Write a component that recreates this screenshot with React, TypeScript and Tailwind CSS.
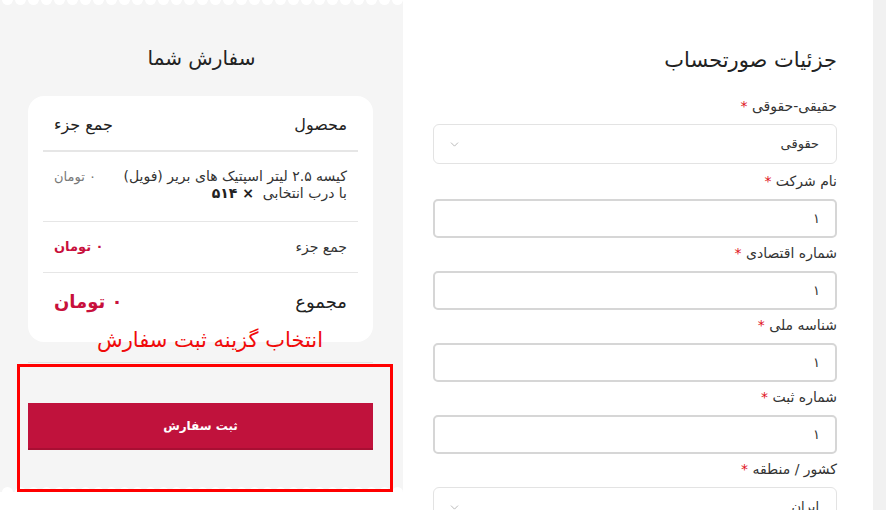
import React from 'react';
import { ChevronDown } from 'lucide-react';

const font = { fontFamily: '"DejaVu Sans", "Noto Sans", sans-serif' };

const Scallops: React.FC<{ bottom?: boolean }> = ({ bottom }) => (
  <div
    className={`absolute left-0 right-0 flex gap-[2px] overflow-hidden pointer-events-none ${
      bottom ? 'bottom-[-6px]' : 'top-[-6px]'
    }`}
  >
    {Array.from({ length: 34 }).map((_, i) => (
      <div key={i} className="w-[11px] h-[11px] rounded-full bg-white shrink-0" />
    ))}
  </div>
);

const Label: React.FC<{ text: string }> = ({ text }) => (
  <div className="pt-[5px] pb-[8px] h-[33px] text-[14px] leading-[20px] text-[#333]">
    {text} <span className="text-[#e01020]">*</span>
  </div>
);

const TextInput: React.FC<{ value: string }> = ({ value }) => (
  <div className="h-[39px] border-2 border-[#d6d6d6] rounded-[5px] flex items-center px-[15px] text-[13px] text-[#333]">
    {value}
  </div>
);

const SelectBox: React.FC<{ value: string }> = ({ value }) => (
  <div className="h-[40px] border border-[#e3e3e3] rounded-[6px] flex items-center justify-between pr-[17px] pl-[14px] text-[13px] text-[#333]">
    <span>{value}</span>
    <ChevronDown size={13} strokeWidth={1.5} className="text-[#aaa]" />
  </div>
);

const OrderSummary: React.FC = () => (
  <section className="relative w-[403px] h-[492px] bg-[#f5f5f5] shrink-0">
    <Scallops />
    <Scallops bottom />
    <h2 className="pt-[44px] text-center text-[20px] leading-[28px] text-[#222]">سفارش شما</h2>

    <div className="mr-[30px] ml-[28px] mt-[24px] h-[246px] bg-white rounded-[16px] px-[15px] pt-[14px]">
      <div className="flex justify-between items-center h-[30px] px-[11px] text-[16px] text-[#222]">
        <span>محصول</span>
        <span>جمع جزء</span>
      </div>
      <div className="h-[2px] bg-[#e6e6e6] mt-[10px]" />

      <div className="flex justify-between items-start h-[69px] px-[11px] pt-[16px] text-[14px] leading-[17px]">
        <div className="text-[#333]">
          کیسه ۲.۵ لیتر اسپتیک های بریر (فویل)
          <br />
          با درب انتخابی&nbsp; <b className="text-[#222]">× ۵۱۴</b>
        </div>
        <span className="text-[#777] text-[13px]">۰ تومان</span>
      </div>
      <div className="h-px bg-[#e6e6e6]" />

      <div className="flex justify-between items-center h-[50px] px-[11px] text-[14px]">
        <span className="text-[#333]">جمع جزء</span>
        <span className="text-[#c8103c] font-bold text-[13px]">۰ تومان</span>
      </div>
      <div className="h-px bg-[#e6e6e6]" />

      <div className="flex justify-between items-center h-[56px] px-[11px]">
        <span className="text-[18px] text-[#222]">مجموع</span>
        <span className="text-[18px] text-[#c8103c] font-bold">۰ تومان</span>
      </div>
    </div>

    <div className="mr-[30px] ml-[28px] mt-[20px] border-t border-[#e2e2e2] pt-[40px]">
      <button className="w-full h-[47px] bg-[#c0123c] border-b-2 border-[#a80f33] text-white text-[12px] font-bold">
        ثبت سفارش
      </button>
    </div>

    {/* annotation overlays */}
    <div className="absolute left-[97px] top-[326px] text-[21px] leading-[28px] text-[#f00a0a]">
      انتخاب گزینه ثبت سفارش
    </div>
    <div className="absolute left-[17px] top-[364px] w-[376px] h-[128px] border-[3px] border-[#ff0000]" />
  </section>
);

const BillingForm: React.FC = () => (
  <section className="flex-1 bg-white pt-[45px] pr-[36px] pl-[30px]">
    <h2 className="text-[21px] leading-[30px] text-[#222] mb-[16px]">جزئیات صورتحساب</h2>
    <Label text="حقیقی-حقوقی" />
    <SelectBox value="حقوقی" />
    <div className="h-[2px]" />
    <Label text="نام شرکت" />
    <TextInput value="۱" />
    <Label text="شماره اقتصادی" />
    <TextInput value="۱" />
    <Label text="شناسه ملی" />
    <TextInput value="۱" />
    <Label text="شماره ثبت" />
    <TextInput value="۱" />
    <Label text="کشور / منطقه" />
    <SelectBox value="ایران" />
  </section>
);

const App: React.FC = () => {
  return (
    <div dir="rtl" style={font} className="flex w-[886px] h-[510px] overflow-hidden bg-white">
      <div className="w-[13px] bg-[#f1f1f1] shrink-0" />
      <BillingForm />
      <OrderSummary />
    </div>
  );
};

export default App;
